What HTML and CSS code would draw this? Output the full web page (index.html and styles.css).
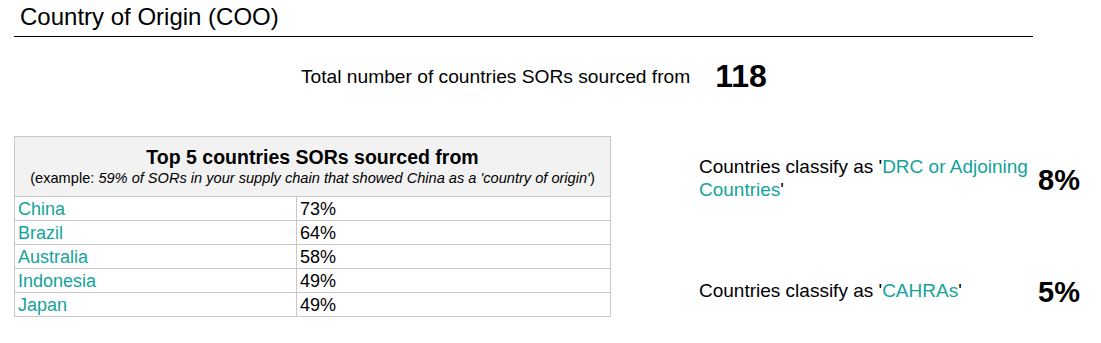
FILE: index.html
```html
<!DOCTYPE html>
<html lang="en">
<head>
<meta charset="utf-8">
<title>Country of Origin (COO)</title>
<link rel="stylesheet" href="styles.css">
</head>
<body>
<div class="page">
  <h1 class="title">Country of Origin (COO)</h1>
  <div class="total">
    <span class="total-label">Total number of countries SORs sourced from</span>
    <span class="total-value">118</span>
  </div>
  <div class="main">
    <div class="tbl">
      <div class="tbl-head">
        <div class="tbl-title">Top 5 countries SORs sourced from</div>
        <div class="tbl-sub">(example: <i>59% of SORs in your supply chain that showed China as a 'country of origin'</i>)</div>
      </div>
      <div class="tbl-row"><span class="c1 link">China</span><span class="c2">73%</span></div>
      <div class="tbl-row"><span class="c1 link">Brazil</span><span class="c2">64%</span></div>
      <div class="tbl-row"><span class="c1 link">Australia</span><span class="c2">58%</span></div>
      <div class="tbl-row"><span class="c1 link">Indonesia</span><span class="c2">49%</span></div>
      <div class="tbl-row"><span class="c1 link">Japan</span><span class="c2">49%</span></div>
    </div>
    <div class="side">
      <div class="stat">
        <div class="stat-text">
          <div class="stat-line">Countries classify as '<span class="link">DRC or Adjoining</span></div>
          <div class="stat-line"><span class="link">Countries</span>'</div>
        </div>
        <div class="stat-value">8%</div>
      </div>
      <div class="stat stat-2">
        <div class="stat-text">
          <div class="stat-line">Countries classify as '<span class="link">CAHRAs</span>'</div>
        </div>
        <div class="stat-value">5%</div>
      </div>
    </div>
  </div>
</div>
</body>
</html>
```
FILE: styles.css
```css
html, body {
  margin: 0;
  padding: 0;
  background: #ffffff;
}

body {
  font-family: "Liberation Sans", Arial, sans-serif;
  color: #000000;
}

.page {
  padding-left: 14px;
}

.title {
  width: 1019px;
  box-sizing: border-box;
  margin: 0;
  padding: 3px 0 5px 6px;
  font-size: 24px;
  font-weight: normal;
  line-height: 28px;
  border-bottom: 1px solid #000000;
}

.total {
  display: flex;
  align-items: center;
  gap: 25px;
  margin-top: 24px;
  padding-left: 287px;
}

.total-label {
  font-size: 19.2px;
  line-height: 19px;
}

.total-value {
  font-size: 32px;
  font-weight: bold;
  line-height: 31px;
}

.main {
  display: flex;
  align-items: flex-start;
  gap: 88px;
  margin-top: 44px;
}

.link {
  color: #14a39a;
}

.tbl {
  width: 597px;
  box-sizing: border-box;
  border: 1px solid #c8c8c8;
}

.tbl-head {
  height: 59px;
  box-sizing: border-box;
  padding-top: 9px;
  background: #f2f2f2;
  text-align: center;
}

.tbl-title {
  font-size: 19.5px;
  font-weight: bold;
  line-height: 22px;
}

.tbl-sub {
  font-size: 14.6px;
  line-height: 20px;
}

.tbl-row {
  display: grid;
  grid-template-columns: 282px 1fr;
  height: 24px;
  box-sizing: border-box;
  border-top: 1px solid #c8c8c8;
  font-size: 18px;
  line-height: 21px;
}

.c1, .c2 {
  padding: 2px 0 0 3px;
}

.c1 {
  border-right: 1px solid #c8c8c8;
}

.side {
  width: 381px;
  padding-top: 19px;
  display: flex;
  flex-direction: column;
  gap: 72px;
}

.stat {
  display: flex;
  align-items: center;
  justify-content: space-between;
}

.stat-text {
  width: 336px;
  font-size: 19px;
  line-height: 23px;
}

.stat-line {
  white-space: nowrap;
}

.stat-value {
  margin-top: 3px;
  font-size: 29px;
  font-weight: bold;
  line-height: 32px;
}
```
